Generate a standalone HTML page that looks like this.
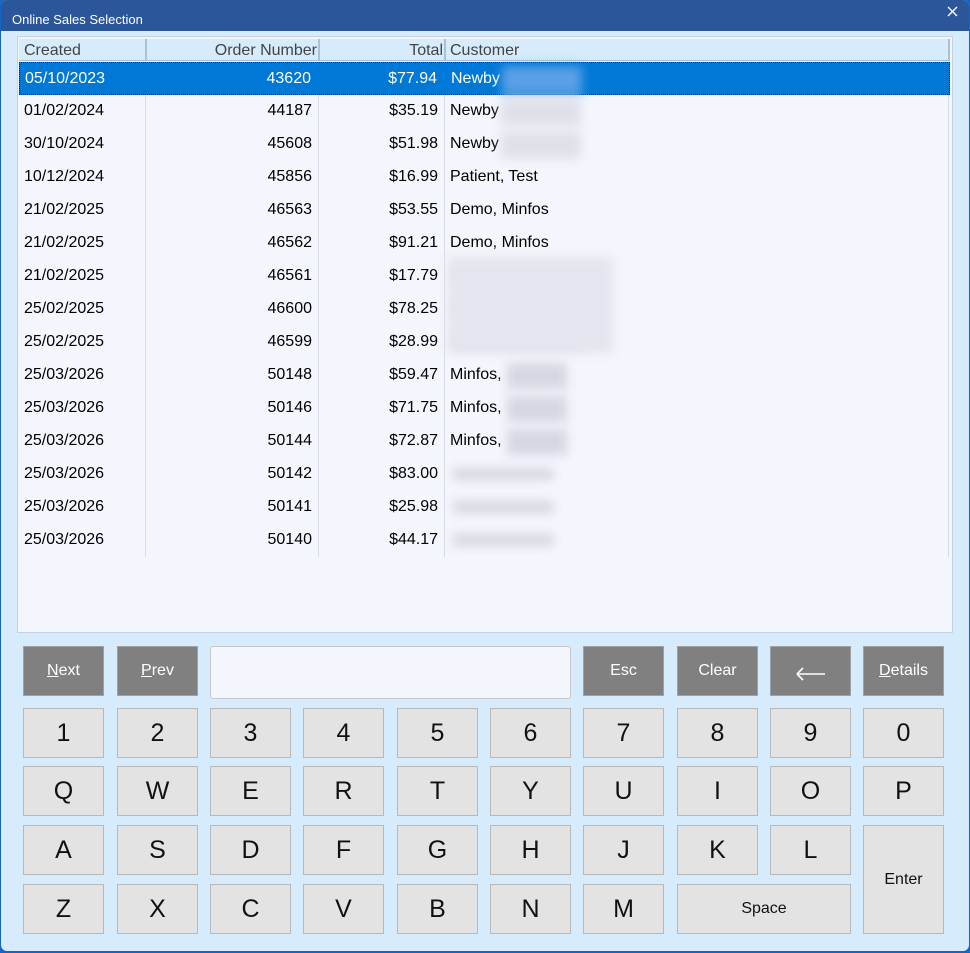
<!DOCTYPE html>
<html><head><meta charset="utf-8"><style>
*{box-sizing:border-box;margin:0;padding:0}
body{width:970px;height:953px;overflow:hidden;background:#1565c8;font-family:"Liberation Sans",sans-serif;position:relative}
.win{position:absolute;left:1px;top:0;width:968px;height:951px;background:#d6ebfc;border-radius:6px;overflow:hidden}
.title{position:absolute;left:0;top:0;width:968px;height:31px;background:#2b579a;color:#fff;font-size:13px;line-height:39px;padding-left:11px}
.grid{position:absolute;left:16px;top:36px;width:936px;height:597px;background:#f4f6fd;border:1px solid #c4d3e0}
.hdr{position:absolute;left:1px;top:2px;width:931px;height:22px;background:#d6ebfc;border-bottom:1px solid #a9c0d6}
.c{position:absolute;font-size:16px;white-space:nowrap}
.hdr .c{color:#444;top:3px}
.row{position:absolute;left:1px;width:931px;height:33px}
.row .c{top:7px;color:#000}
.sel{background:#0078d7;border:1px dotted #222}
.sel .c{color:#fff}
.vl{position:absolute;top:0;width:1px;height:100%;background:#d8dce6}
.blur{position:absolute;background:#d5d7e2;filter:blur(5px)}
.b{position:absolute;width:81px;height:50px;background:#e3e3e3;border:1px solid #b8b8b8;font-size:25px;display:flex;align-items:center;justify-content:center;color:#111}
.d{background:#808080;border:1px solid #a0a0a0;color:#fff;font-size:16px}
.d u{text-decoration:underline}
</style></head><body><div class="win">
<div class="title">Online Sales Selection</div>
<svg style="position:absolute;left:946px;top:6px" width="11" height="11"><path d="M1 1L10 10M10 1L1 10" stroke="#fff" stroke-width="1.4"/></svg>
<div class="grid">
<div class="hdr">
<div class="c" style="left:5px">Created</div>
<div class="c" style="right:633px">Order Number</div>
<div class="c" style="right:507px">Total</div>
<div class="c" style="left:431px">Customer</div>
<div class="vl" style="left:126px;background:#a9c0d6;width:2px"></div>
<div class="vl" style="left:299px;background:#a9c0d6;width:2px"></div>
<div class="vl" style="left:425px;background:#a9c0d6;width:2px"></div>
<div class="vl" style="left:929px;background:#a9c0d6;width:2px"></div>
</div>
<div id="rows"></div>
<div class="blur" style="left:430px;top:220px;width:165px;height:96px;background:#e4e5ee"></div>
</div>
<div id="keys"></div>
<div style="position:absolute;left:209px;top:646px;width:361px;height:53px;background:#f4f6fd;border:1px solid #c8c8c8;border-radius:3px"></div>
</div>
<script>
var data=[["05/10/2023","43620","$77.94","Newby",1],["01/02/2024","44187","$35.19","Newby",1],["30/10/2024","45608","$51.98","Newby",1],["10/12/2024","45856","$16.99","Patient, Test",0],["21/02/2025","46563","$53.55","Demo, Minfos",0],["21/02/2025","46562","$91.21","Demo, Minfos",0],["21/02/2025","46561","$17.79","",2],["25/02/2025","46600","$78.25","",2],["25/02/2025","46599","$28.99","",2],["25/03/2026","50148","$59.47","Minfos,",3],["25/03/2026","50146","$71.75","Minfos,",3],["25/03/2026","50144","$72.87","Minfos,",3],["25/03/2026","50142","$83.00","",4],["25/03/2026","50141","$25.98","",4],["25/03/2026","50140","$44.17","",4]];
var h="";data.forEach(function(r,i){var t=25+i*33;h+='<div class="row'+(i==0?' sel':'')+'" style="top:'+t+'px">'+
'<div class="c" style="left:5px">'+r[0]+'</div><div class="c" style="right:638px">'+r[1]+'</div><div class="c" style="right:512px">'+r[2]+'</div><div class="c" style="left:431px">'+r[3]+'</div>'+
(i?'<div class="vl" style="left:126px"></div><div class="vl" style="left:299px"></div><div class="vl" style="left:425px"></div><div class="vl" style="left:929px"></div>':'')+
(r[4]==1?'<div class="blur" style="left:482px;top:3px;width:80px;height:28px;background:'+(i==0?'#5aa0e6':'#dfe1ea')+'"></div>':'')+
(r[4]==3?'<div class="blur" style="left:488px;top:4px;width:60px;height:26px"></div>':'')+
(r[4]==2?'<div class="blur" style="left:434px;top:10px;width:130px;height:12px"></div>':'')+
(r[4]==4?'<div class="blur" style="left:434px;top:10px;width:100px;height:12px"></div>':'')+
'</div>'});document.getElementById('rows').innerHTML=h;
var X=[22,116,209,302,396,489,582,676,769,862],k="";
function b(x,y,w,hh,t,cls,fs){k+='<div class="b '+(cls||'')+'" style="left:'+x+'px;top:'+y+'px;width:'+w+'px;height:'+hh+'px;'+(fs?'font-size:'+fs+'px':'')+'">'+t+'</div>'}
b(X[0],646,81,50,'<u>N</u>ext','d');b(X[1],646,81,50,'<u>P</u>rev','d');b(X[6],646,81,50,'Esc','d');b(X[7],646,81,50,'Clear','d');
b(X[8],646,81,50,'<svg width="32" height="16" style="margin-top:6px"><path d="M2 8H30M2 8L8 2M2 8L8 14" stroke="#fff" stroke-width="1.6" fill="none"/></svg>','d');b(X[9],646,81,50,'<u>D</u>etails','d');
var R=["1234567890","QWERTYUIOP","ASDFGHJKL","ZXCVBNM"],Y=[708,766,825,884];
R.forEach(function(s,j){for(var i=0;i<s.length;i++)b(X[i],Y[j],81,50,s[i])});
b(X[7],884,174,50,'Space','',16);b(X[9],825,81,109,'Enter','',16);
document.getElementById('keys').innerHTML=k;
</script></body></html>
